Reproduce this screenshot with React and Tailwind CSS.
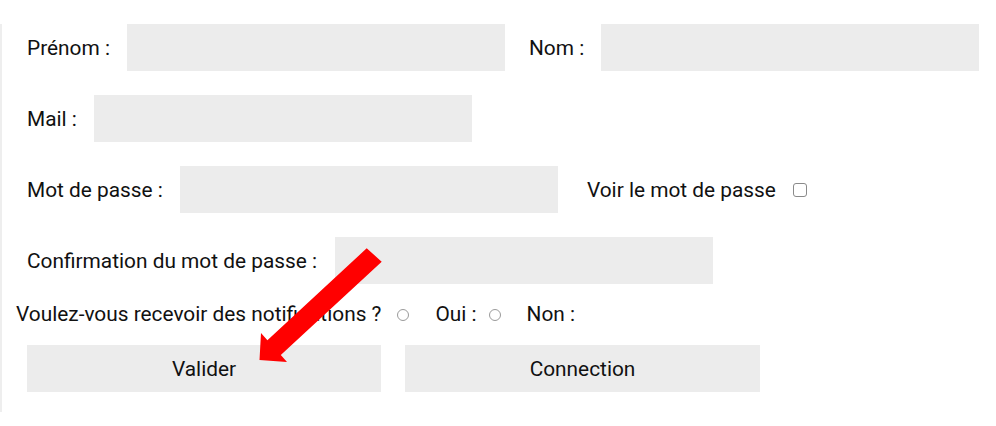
import React from 'react';

const field = 'h-[47px] w-[378px] bg-[#ececec] outline-none';

const Row = ({ children, className = '' }) => (
  <div className={`flex items-center h-[47px] mt-[24px] pl-[25px] ${className}`}>{children}</div>
);

const Label = ({ children, className = '' }) => (
  <label className={`pt-[2px] ${className}`}>{children}</label>
);

// red arrow pasted over the form, pointing at "Valider"
const Arrow = () => (
  <svg
    className="absolute inset-0 pointer-events-none"
    width="996"
    height="426"
    viewBox="0 0 996 426"
  >
    <polygon
      fill="#ff0000"
      points="366.7,248.3 381.7,261.7 280.8,355 287,362 259.5,360 261,333 267.4,340.2"
    />
  </svg>
);

const Radio = ({ className = '' }) => (
  <input
    type="radio"
    name="notif"
    className={`appearance-none w-[12px] h-[12px] rounded-full border border-[#9a9a9a] bg-white m-0 ${className}`}
  />
);

export default function App() {
  return (
    <div className="relative w-full h-[426px] bg-white text-[#111] text-[20.85px] font-['Roboto','Liberation_Sans',sans-serif] overflow-hidden">
      <div className="border-l-2 border-[#eeeeee] pb-[20px]">
        <Row>
          <Label>Prénom :</Label>
          <input className={`${field} ml-[17px]`} />
          <Label className="ml-[24px]">Nom :</Label>
          <input className={`${field} ml-[17px]`} />
        </Row>
        <Row>
          <Label>Mail :</Label>
          <input className={`${field} ml-[17px]`} />
        </Row>
        <Row>
          <Label>Mot de passe :</Label>
          <input type="password" className={`${field} ml-[17px]`} />
          <Label className="ml-[29px]">Voir le mot de passe</Label>
          <input
            type="checkbox"
            className="appearance-none w-[14px] h-[14px] rounded-[3px] border border-[#8a8a8a] bg-white m-0 ml-[17px]"
          />
        </Row>
        <Row>
          <Label>Confirmation du mot de passe :</Label>
          <input type="password" className={`${field} ml-[18px]`} />
        </Row>
        <div className="flex items-center h-[24px] mt-[19px] pl-[14px]">
          <span>Voulez-vous recevoir des notifications ?</span>
          <Radio className="ml-[16px]" />
          <label className="ml-[26px]">Oui :</label>
          <Radio className="ml-[12px]" />
          <label className="ml-[26px]">Non :</label>
        </div>
        <div className="flex h-[47px] mt-[18px] pl-[25px]">
          <button className="w-[354px] h-[47px] bg-[#ececec] pt-[2px]">Valider</button>
          <button className="w-[355px] h-[47px] bg-[#ececec] pt-[2px] ml-[24px]">Connection</button>
        </div>
      </div>
      <Arrow />
    </div>
  );
}
